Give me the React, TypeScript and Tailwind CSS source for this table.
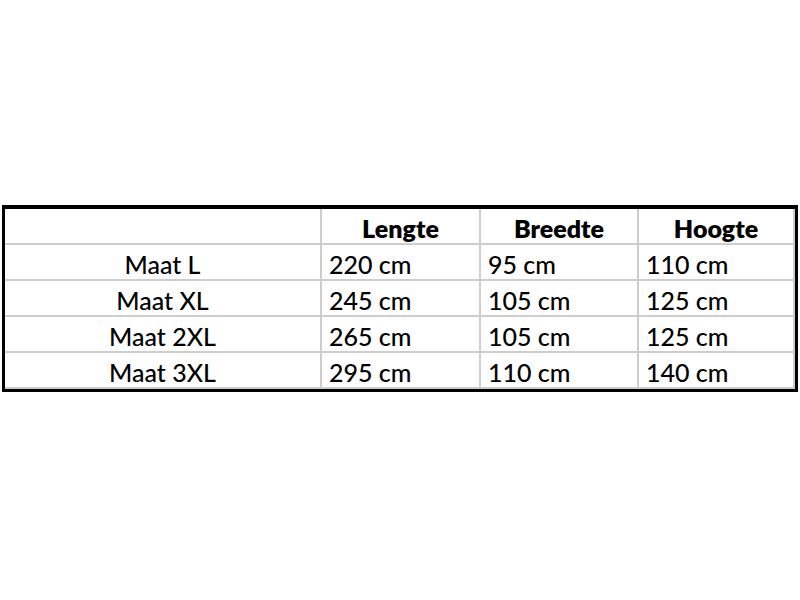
import React from "react";

const rows = [
  ["Maat L", "220 cm", "95 cm", "110 cm"],
  ["Maat XL", "245 cm", "105 cm", "125 cm"],
  ["Maat 2XL", "265 cm", "105 cm", "125 cm"],
  ["Maat 3XL", "295 cm", "110 cm", "140 cm"],
];

const headers = ["", "Lengte", "Breedte", "Hoogte"];

export default function App() {
  return (
    <div
      className="w-[800px] h-[600px] bg-white pt-[205px] pl-[2px] text-black"
      style={{ fontFamily: "Lato, 'Open Sans', sans-serif" }}
    >
      <div className="w-[796px] border-black border-x-[3px] border-t-4 border-b-[3px]">
        <div className="grid grid-cols-[317px_159px_158px_156px]">
          {headers.map((h, i) => (
            <div
              key={"h" + i}
              className="h-[36px] border-b-2 border-r-2 border-[#cdcdcd] flex items-center justify-center text-[25px] font-extrabold leading-none pt-[4px]"
            >
              {h}
            </div>
          ))}
          {rows.map((r, ri) =>
            r.map((c, ci) => (
              <div
                key={ri + "-" + ci}
                className={
                  "h-[36px] border-b-2 border-r-2 border-[#cdcdcd] flex items-center text-[25px] font-medium leading-none pt-[4px] " +
                  (ci === 0 ? "justify-center" : "justify-start pl-[7px]")
                }
              >
                {c}
              </div>
            ))
          )}
        </div>
      </div>
    </div>
  );
}
